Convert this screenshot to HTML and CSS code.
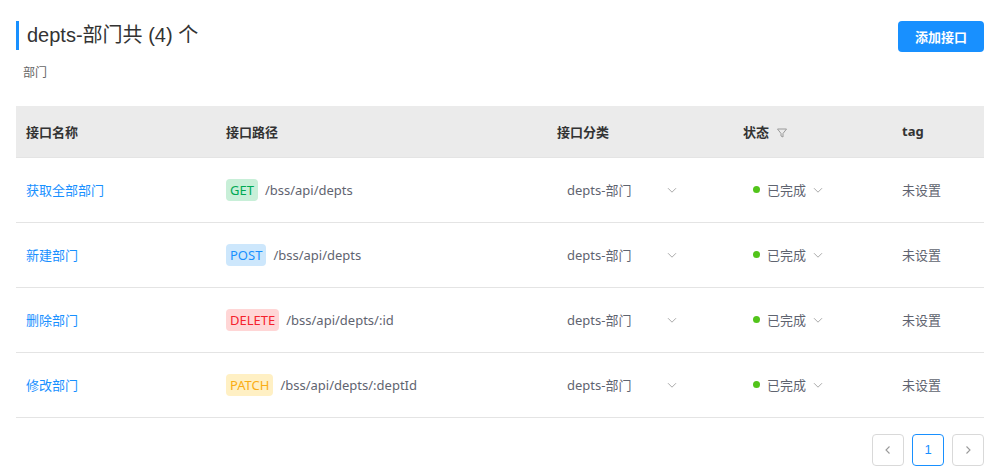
FILE: index.html
```html
<!DOCTYPE html>
<html lang="zh">
<head>
<meta charset="utf-8">
<link rel="stylesheet" href="styles.css">
</head>
<body>
<div class="page">
  <div class="head">
    <div class="head-left">
      <h1 class="title">depts-部门共 (4) 个</h1>
      <div class="desc">部门</div>
    </div>
    <button class="btn-primary">添加接口</button>
  </div>

  <table class="table">
    <colgroup>
      <col class="c1"><col class="c2"><col class="c3"><col class="c4"><col class="c5">
    </colgroup>
    <thead>
      <tr>
        <th>接口名称</th>
        <th>接口路径</th>
        <th>接口分类</th>
        <th>状态 <svg class="filter" width="12" height="12" viewBox="0 0 12 12"><path d="M1.5 2h9L7 6.5V10L5 9V6.5z" fill="none" stroke="#999" stroke-width="1" stroke-linejoin="round"/></svg></th>
        <th>tag</th>
      </tr>
    </thead>
    <tbody>
      <tr>
        <td><a class="link">获取全部部门</a></td>
        <td><span class="tag get">GET</span><span class="path">/bss/api/depts</span></td>
        <td><div class="select cat"><span>depts-部门</span><svg class="chev" width="12" height="12" viewBox="0 0 12 12"><path d="M2 4.2l4 4 4-4" fill="none" stroke="#aaa" stroke-width="1"/></svg></div></td>
        <td><div class="select st"><i class="dot"></i><span>已完成</span><svg class="chev" width="12" height="12" viewBox="0 0 12 12"><path d="M2 4.2l4 4 4-4" fill="none" stroke="#aaa" stroke-width="1"/></svg></div></td>
        <td class="muted">未设置</td>
      </tr>
      <tr>
        <td><a class="link">新建部门</a></td>
        <td><span class="tag post">POST</span><span class="path">/bss/api/depts</span></td>
        <td><div class="select cat"><span>depts-部门</span><svg class="chev" width="12" height="12" viewBox="0 0 12 12"><path d="M2 4.2l4 4 4-4" fill="none" stroke="#aaa" stroke-width="1"/></svg></div></td>
        <td><div class="select st"><i class="dot"></i><span>已完成</span><svg class="chev" width="12" height="12" viewBox="0 0 12 12"><path d="M2 4.2l4 4 4-4" fill="none" stroke="#aaa" stroke-width="1"/></svg></div></td>
        <td class="muted">未设置</td>
      </tr>
      <tr>
        <td><a class="link">删除部门</a></td>
        <td><span class="tag del">DELETE</span><span class="path">/bss/api/depts/:id</span></td>
        <td><div class="select cat"><span>depts-部门</span><svg class="chev" width="12" height="12" viewBox="0 0 12 12"><path d="M2 4.2l4 4 4-4" fill="none" stroke="#aaa" stroke-width="1"/></svg></div></td>
        <td><div class="select st"><i class="dot"></i><span>已完成</span><svg class="chev" width="12" height="12" viewBox="0 0 12 12"><path d="M2 4.2l4 4 4-4" fill="none" stroke="#aaa" stroke-width="1"/></svg></div></td>
        <td class="muted">未设置</td>
      </tr>
      <tr>
        <td><a class="link">修改部门</a></td>
        <td><span class="tag patch">PATCH</span><span class="path">/bss/api/depts/:deptId</span></td>
        <td><div class="select cat"><span>depts-部门</span><svg class="chev" width="12" height="12" viewBox="0 0 12 12"><path d="M2 4.2l4 4 4-4" fill="none" stroke="#aaa" stroke-width="1"/></svg></div></td>
        <td><div class="select st"><i class="dot"></i><span>已完成</span><svg class="chev" width="12" height="12" viewBox="0 0 12 12"><path d="M2 4.2l4 4 4-4" fill="none" stroke="#aaa" stroke-width="1"/></svg></div></td>
        <td class="muted">未设置</td>
      </tr>
    </tbody>
  </table>

  <div class="pager">
    <button class="pg"><svg width="12" height="12" viewBox="0 0 12 12"><path d="M7.5 2.5L4 6l3.5 3.5" fill="none" stroke="#999" stroke-width="1.1"/></svg></button>
    <button class="pg active">1</button>
    <button class="pg"><svg width="12" height="12" viewBox="0 0 12 12"><path d="M4.5 2.5L8 6 4.5 9.5" fill="none" stroke="#999" stroke-width="1.1"/></svg></button>
  </div>
</div>
</body>
</html>
```

FILE: styles.css
```css
* { box-sizing: border-box; }
html, body { margin: 0; padding: 0; background: #fff; }
body {
  font-family: "Noto Sans", "Noto Sans CJK SC", sans-serif;
  color: #333;
}
.page { padding: 21px 22px 0 16px; }
.head {
  display: flex;
  justify-content: space-between;
  align-items: flex-start;
}
.title {
  margin: 0;
  font-family: "Liberation Sans", "Noto Sans CJK SC", sans-serif;
  font-size: 20px;
  font-weight: 400;
  line-height: 29px;
  height: 29px;
  color: #333;
  border-left: 3px solid #1890ff;
  padding-left: 8px;
}
.desc {
  font-size: 12px;
  color: #666;
  margin-top: 14px;
  padding-left: 7px;
  line-height: 17px;
}
.btn-primary {
  width: 86px;
  height: 31px;
  border: 0;
  border-radius: 4px;
  background: #1890ff;
  color: #fff;
  font-family: "Noto Sans CJK SC", sans-serif;
  font-size: 13px;
  font-weight: 700;
  cursor: pointer;
}
.table {
  margin-top: 25px;
  width: 968px;
  border-collapse: collapse;
  table-layout: fixed;
  font-size: 13px;
}
.c1 { width: 200px; }
.c2 { width: 331px; }
.c3 { width: 186px; }
.c4 { width: 159px; }
.c5 { width: 92px; }
th {
  background: #ebebeb;
  height: 51px;
  text-align: left;
  font-weight: 700;
  color: #333;
  padding: 0 10px;
  font-size: 13px;
  border-bottom: 1px solid #e4e4e4;
}
.filter { vertical-align: -2px; margin-left: 4px; }
td {
  height: 65px;
  padding: 0 10px;
  border-bottom: 1px solid #e4e4e4;
  vertical-align: middle;
  color: #666;
}
.link { color: #1890ff; cursor: pointer; }
.tag {
  display: inline-block;
  height: 22px;
  line-height: 22px;
  padding: 0 4px;
  border-radius: 4px;
  font-size: 13px;
  margin-right: 7px;
  vertical-align: middle;
}
.path { vertical-align: middle; color: #5f6470; }
.get { background: #c8efd8; color: #00a854; }
.post { background: #cde7fc; color: #1890ff; }
.del { background: #ffd6d6; color: #f5222d; }
.patch { background: #fff0c4; color: #faad14; }
.select {
  display: flex;
  align-items: center;
  color: #5f6470;
}
.cat { width: 121px; padding-left: 10px; justify-content: space-between; }
.st { padding-left: 10px; }
.dot {
  width: 7px; height: 7px; border-radius: 50%;
  background: #52c41a;
  display: inline-block;
  margin-right: 7px;
}
.st .chev { margin-left: 6px; }
.muted { color: #5f6470; }
.pager {
  display: flex;
  justify-content: flex-end;
  gap: 8px;
  margin-top: 16px;
}
.pg {
  width: 32px;
  height: 32px;
  border: 1px solid #d9d9d9;
  border-radius: 4px;
  background: #fff;
  display: flex;
  align-items: center;
  justify-content: center;
  font-family: "Liberation Sans", sans-serif;
  font-size: 13px;
  color: #666;
  padding: 0;
}
.pg.active { border-color: #1890ff; color: #1890ff; }
```
